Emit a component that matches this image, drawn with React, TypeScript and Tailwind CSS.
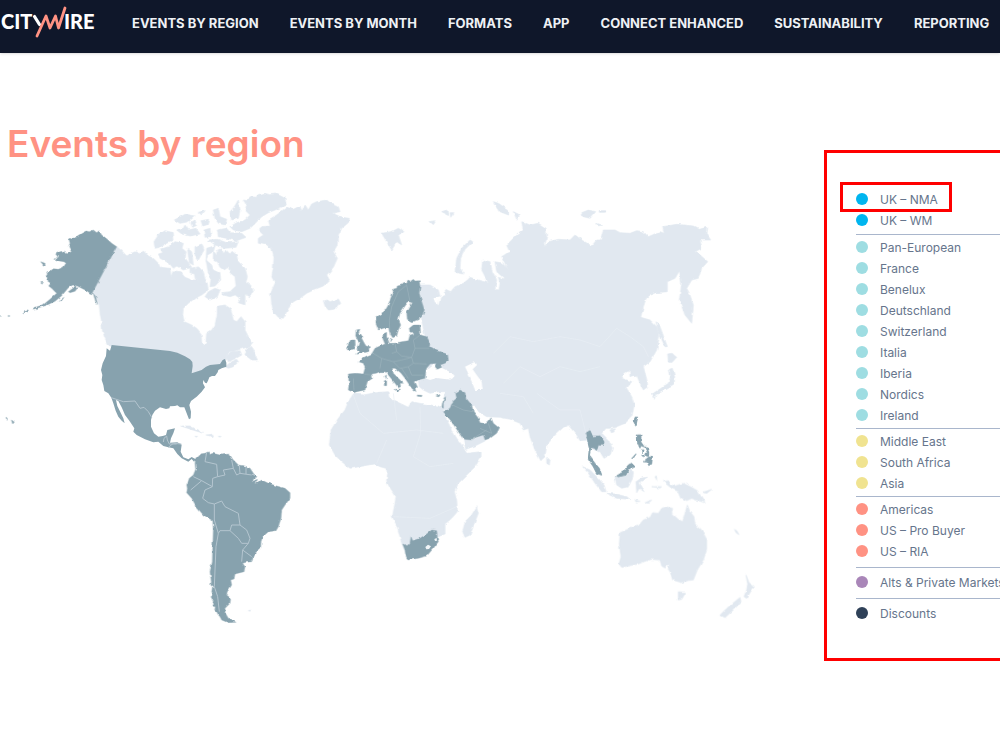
interface RegionItem {
  label: string;
  dot: string;
  marked?: boolean;
}

interface RegionGroup {
  id: string;
  spacing: string;
  items: RegionItem[];
}

const NAV_ITEMS = [
  'EVENTS BY REGION',
  'EVENTS BY MONTH',
  'FORMATS',
  'APP',
  'CONNECT ENHANCED',
  'SUSTAINABILITY',
  'REPORTING',
];

const GROUPS: RegionGroup[] = [
  {
    id: 'uk',
    spacing: 'pb-[3px]',
    items: [
      { label: 'UK – NMA', dot: 'bg-[#00b5ef]', marked: true },
      { label: 'UK – WM', dot: 'bg-[#00b5ef]' },
    ],
  },
  {
    id: 'europe',
    spacing: 'border-t py-[2px]',
    items: [
      { label: 'Pan-European', dot: 'bg-[#9edde2]' },
      { label: 'France',       dot: 'bg-[#9edde2]' },
      { label: 'Benelux',      dot: 'bg-[#9edde2]' },
      { label: 'Deutschland',  dot: 'bg-[#9edde2]' },
      { label: 'Switzerland',  dot: 'bg-[#9edde2]' },
      { label: 'Italia',       dot: 'bg-[#9edde2]' },
      { label: 'Iberia',       dot: 'bg-[#9edde2]' },
      { label: 'Nordics',      dot: 'bg-[#9edde2]' },
      { label: 'Ireland',      dot: 'bg-[#9edde2]' },
    ],
  },
  {
    id: 'emea-asia',
    spacing: 'border-t py-[2px]',
    items: [
      { label: 'Middle East',  dot: 'bg-[#f0e390]' },
      { label: 'South Africa', dot: 'bg-[#f0e390]' },
      { label: 'Asia',         dot: 'bg-[#f0e390]' },
    ],
  },
  {
    id: 'americas',
    spacing: 'border-t pt-[2px] pb-[5px]',
    items: [
      { label: 'Americas',       dot: 'bg-[#ff9283]' },
      { label: 'US – Pro Buyer', dot: 'bg-[#ff9283]' },
      { label: 'US – RIA',       dot: 'bg-[#ff9283]' },
    ],
  },
  {
    id: 'alts',
    spacing: 'border-t pt-1 pb-[5px]',
    items: [{ label: 'Alts & Private Markets', dot: 'bg-[#a986b8]' }],
  },
  {
    id: 'discounts',
    spacing: 'border-t pt-1',
    items: [{ label: 'Discounts', dot: 'bg-[#2f4158]' }],
  },
];

function Logo() {
  return (
    <svg viewBox="0 0 96 40" className="h-10 w-24 shrink-0" role="img" aria-label="Citywire">
      <g fill="#fff" fontFamily="Lato, sans-serif" fontWeight="900" fontSize="20">
        <text x="1" y="25">CIT</text>
        <text x="64" y="25">IRE</text>
      </g>
      <g fill="none" strokeLinecap="round" strokeLinejoin="round">
        <path d="M34.500 12.500 39.500 20.500" stroke="#fff" strokeWidth="3.200" />
        <path d="M37 32 46 12 50 24 55.500 12 58.500 24 65 4" stroke="#ff9283" strokeWidth="2.800" />
      </g>
    </svg>
  );
}

/** World map: event countries are dark, everything else light */
function WorldMap() {
  return (
    <svg viewBox="0 0 2472 1380" className="block w-full" role="img" aria-label="World map of event regions">
      <defs>
        {/* Roughens the coastlines */}
        <filter id="coast" filterUnits="userSpaceOnUse" x="0" y="0" width="2472" height="1380" colorInterpolationFilters="sRGB">
          <feTurbulence type="fractalNoise" baseFrequency="0.06" numOctaves="2" seed="4" result="noise" />
          <feDisplacementMap in="SourceGraphic" in2="noise" scale="9" xChannelSelector="R" yChannelSelector="G" />
        </filter>
      </defs>
      <g filter="url(#coast)">
        <g fill="#e1e8f0" stroke="#e1e8f0" strokeWidth="2" strokeLinejoin="round">
          {/* Canada */}
          <path d="M350 200 365 212 380 228 395 220 405 215 420 222 430 213 445 228 460 235 475 250 480 262 510 265 513 290 520 272 540 275 555 292 575 300 590 300 605 310 622 312 625 330 605 345 585 355 565 370 550 385 548 405 553 425 575 435 590 445 603 460 605 485 612 495 618 485 620 460 635 450 645 435 648 420 652 400 652 378 675 375 690 385 695 400 700 420 710 425 723 410 735 425 735 450 745 470 758 490 750 500 730 505 705 512 690 515 678 530 678 540 640 565 575 590 560 560 400 515 335 500 325 495 315 475 308 455 305 425 300 400 298 375 285 345 277 338Z" />
          {/* Arctic islands, Greenland, Iceland */}
          <g transform="translate(390 0)">
            <path d="M72 185 85 165 105 152 130 158 132 180 110 190 90 202 75 205ZM90 235 85 222 98 218 92 208 115 200 135 185 160 190 156 205 168 215 166 235 185 262 160 270 140 258 130 265 118 250Z" />
            <path d="M140 150 160 145 165 135 175 150 198 145 210 162 180 168 155 162ZM133 120 165 103 195 108 175 125 150 130ZM205 97 225 92 215 105ZM222 150 240 145 243 170 225 172ZM250 90 265 85 270 110 290 118 285 135 265 130 255 115ZM182 128 195 120 200 136 188 142ZM213 122 236 118 232 134 218 138Z" />
            <path d="M262 150 290 145 300 158 335 160 348 172 320 182 290 175 265 170ZM235 180 262 178 290 188 325 185 318 202 285 205 255 195ZM195 200 215 192 222 210 205 240 195 225ZM230 205 255 197 250 215 232 225 228 245ZM172 205 185 215 190 255 178 248Z" />
            <path d="M340 60 352 62 360 50 378 52 384 44 400 40 418 44 440 42 465 55 468 75 440 88 415 98 395 110 380 125 360 145 335 155 310 150 300 140 320 128 345 120 360 105 345 90 350 76ZM325 60 330 90 325 115 305 120 300 95 312 82Z" />
            <path d="M250 215 258 228 262 212 276 206 280 222 288 210 300 222 306 214 320 225 325 245 345 265 352 290 348 305 362 316 372 330 360 350 345 342 345 375 325 368 332 356 315 345 300 350 280 345 275 338 300 335 318 318 315 290 300 278 295 262 282 270 270 262 262 245 250 240Z" />
            <path d="M228 240 245 255 250 270 270 280 272 300 255 318 240 320 243 295 235 280ZM255 325 270 330 262 350 240 360 225 350 235 335ZM205 260 220 275 225 295 232 312 210 312 195 295 192 272ZM180 265 196 262 192 282 180 278Z" />
            <path d="M470 82 490 88 510 78 515 94 525 75 535 90 545 72 560 65 590 60 605 72 625 80 630 95 606 99 635 112 658 115 655 128 635 145 625 165 625 190 610 215 622 235 610 262 590 285 598 300 580 318 555 328 530 340 510 355 490 365 475 385 460 415 445 412 430 395 425 370 422 340 435 310 425 290 430 265 432 230 425 205 410 195 385 190 385 175 400 165 385 150 395 140 420 138 415 120 440 105Z" />
            <path d="M580 362 592 360 600 365 625 357 632 370 615 388 595 390 585 378ZM345 525 350 508 362 500 370 510 382 540 365 540ZM285 560 300 548 320 538 325 545 310 560 295 565ZM288 530 305 515 330 512 335 525 318 535 295 545Z" />
          </g>
          {/* Caribbean */}
          <path d="M542 738 570 738 610 760 585 752ZM618 765 642 762 638 770ZM655 769 663 769 660 772ZM585 769 592 769 590 772ZM745 1292 752 1290 750 1294Z" />
          {/* Eurasia */}
          <path d="M1260 315 1290 315 1315 330 1320 348 1298 356 1306 368 1316 377 1322 352 1338 345 1335 327 1352 335 1365 320 1390 310 1405 298 1410 292 1440 302 1465 308 1445 270 1448 240 1470 245 1475 270 1490 300 1485 328 1497 330 1500 310 1495 292 1515 298 1490 275 1485 245 1510 250 1525 270 1505 230 1528 215 1520 195 1545 170 1570 150 1565 125 1590 135 1615 130 1638 145 1640 170 1632 202 1645 185 1675 178 1710 180 1725 165 1745 180 1775 198 1790 180 1802 180 1810 150 1845 150 1860 158 1890 160 1910 152 1930 155 1945 170 1980 155 1992 160 1988 140 2030 133 2080 138 2098 148 2120 142 2118 160 2132 180 2100 180 2105 205 2085 215 2100 225 2123 245 2105 265 2095 295 2075 300 2060 325 2068 340 2080 375 2075 430 2055 405 2038 360 2045 310 2038 273 2025 295 2002 305 2002 335 1970 338 1940 350 1930 380 1922 412 1950 420 1970 440 1978 470 1970 510 1950 545 1930 560 1940 595 1943 620 1930 630 1918 605 1910 585 1890 590 1888 572 1875 578 1865 595 1895 605 1880 625 1895 650 1903 675 1895 710 1875 730 1845 742 1830 745 1818 745 1805 760 1825 780 1837 805 1830 825 1812 835 1800 815 1770 805 1760 780 1740 782 1730 765 1705 735 1690 742 1665 765 1640 795 1635 830 1622 842 1605 810 1590 770 1585 745 1570 750 1560 730 1530 718 1500 712 1460 710 1435 695 1415 675 1325 690 1330 660 1338 635 1315 635 1290 640 1270 630 1258 620 1255 602 1275 596 1290 545 1265 420Z" />
          <path d="M1365 275 1370 235 1385 205 1410 180 1418 185 1395 208 1382 235 1380 265 1392 282 1375 280ZM1480 65 1495 70 1525 90 1525 105 1500 95ZM1540 95 1560 105 1550 118ZM1745 98 1765 90 1787 95 1770 115 1750 110ZM1798 92 1816 92 1816 97 1798 97ZM1790 130 1805 135 1795 138ZM1145 160 1175 155 1195 145 1212 155 1195 165 1205 195 1190 185 1175 210 1160 185ZM1325 95 1340 90 1345 105ZM1350 98 1362 98 1352 112ZM1290 125 1308 122 1300 134Z" />
          {/* Japan, Sakhalin, Sri Lanka, Hainan */}
          <path d="M1968 425 1980 440 2002 500 1995 500 1975 455ZM2003 522 2015 520 2030 532 2015 548 2005 545ZM1960 640 1975 630 1990 620 2005 610 2012 590 2008 568 2017 565 2024 590 2022 612 2005 622 1990 630 1970 640ZM1957 640 1967 642 1963 658ZM1640 832 1650 840 1648 855 1640 850ZM1830 750 1842 746 1842 756 1834 758Z" />
          {/* Africa and Yemen */}
          <g transform="translate(960 570)">
            <path d="M100 72 130 75 165 68 205 65 207 85 240 100 265 112 275 95 310 102 355 108 368 115 378 145 395 180 410 205 425 225 440 250 483 245 483 260 465 290 440 315 415 340 403 365 410 390 412 425 395 445 375 462 375 492 355 500 340 520 258 550 245 520 232 470 217 440 225 400 228 380 205 345 200 330 203 310 198 295 180 290 165 282 130 288 90 295 65 275 45 255 28 225 33 180 55 145 75 120 85 95Z" />
            <path d="M470 410 475 430 465 455 450 495 435 502 428 485 435 455 455 435ZM430 208 455 210 490 195 495 213 465 228 437 238Z" />
          </g>
          {/* Indonesia */}
          <path d="M1748 860 1770 870 1790 890 1812 915 1818 935 1805 935 1785 910 1765 880ZM1818 940 1845 942 1880 950 1890 958 1850 955ZM1845 892 1880 885 1890 870 1900 875 1898 895 1885 920 1865 925 1850 915ZM1908 905 1925 894 1945 892 1915 908 1932 935 1918 925 1910 938Z" />
          {/* Oceania */}
          <g transform="translate(1680 840)">
            <path d="M180 218 210 205 235 198 250 180 270 172 278 158 295 160 305 145 320 140 338 145 335 160 355 178 368 185 375 160 382 135 390 155 402 170 405 192 425 210 440 238 440 270 430 300 412 330 400 360 380 362 365 368 338 360 330 335 325 328 328 312 315 324 305 318 300 300 270 298 235 312 205 318 185 322 177 312 183 290 178 255Z" />
            <path d="M310 65 325 62 330 75 345 78 370 70 395 82 412 92 435 128 415 122 395 115 380 122 362 112 355 95 335 85ZM428 97 455 88 440 100ZM355 395 377 397 365 418 355 420ZM558 345 567 368 583 380 570 398 560 415 552 410 560 390 563 372ZM540 412 543 425 520 450 495 473 480 465 500 445ZM523 208 530 212 537 224 528 218ZM225 120 240 124 228 126ZM255 128 275 120 265 130ZM285 50 290 48 290 60ZM275 80 305 80 300 84Z" />
          </g>
        </g>

        {/* Seas cut into Eurasia */}
        <g fill="#fff">
          <path d="M1275 595 1282 567 1300 552 1318 560 1355 578 1366 590 1350 599 1310 594 1290 600Z" />
          <path d="M1395 560 1425 545 1431 555 1418 568 1430 585 1445 605 1448 630 1425 630 1415 605 1405 582Z" />
        </g>

        <g fill="#87a2ae" stroke="#87a2ae" strokeWidth="1" strokeLinejoin="round">
          {/* Alaska, Hawaii */}
          <path d="M350 200 335 190 322 178 305 165 297 152 290 158 280 150 268 155 258 153 245 160 232 168 218 172 207 178 210 190 206 200 214 215 200 222 194 213 180 215 167 222 173 230 165 238 178 243 192 245 198 250 190 262 175 268 160 266 145 278 137 290 142 300 153 308 146 318 155 325 165 335 170 340 150 358 130 374 100 384 100 388 140 376 165 364 185 347 195 335 205 323 218 315 232 318 245 325 260 332 270 340 280 342 288 368 292 370 286 348 277 338ZM205 335 225 320 234 322 225 334 210 338ZM175 364 192 352 185 362ZM122 245 135 250 136 257 130 255ZM122 305 130 304 126 310ZM80 392 86 394 68 402ZM25 406 30 408 25 410ZM0 407 5 408 0 410ZM34 720 43 726 38 732ZM18 712 26 715 20 718Z" />
          {/* South America */}
          <path transform="translate(510 750)" d="M77 85 90 72 105 70 115 65 118 74 128 70 150 75 178 72 188 88 205 105 225 108 240 115 250 130 257 140 245 155 262 148 258 162 275 150 295 160 320 168 345 175 360 188 360 205 345 225 335 240 333 265 325 290 318 302 295 305 278 320 273 335 272 355 255 370 245 395 228 397 218 400 225 410 222 425 195 432 192 447 182 450 185 465 172 485 170 495 182 505 180 520 165 535 165 548 175 565 198 577 175 578 155 570 150 560 145 555 140 545 134 540 136 530 126 528 130 515 123 500 130 495 125 485 128 470 122 465 124 455 120 425 127 395 128 350 130 300 128 272 100 255 80 232 65 205 50 188 52 175 50 165 58 145 70 135 77 118 75 100Z" />
          {/* Europe */}
          <g transform="translate(990 120)">
            <path d="M138 290 150 283 165 272 175 255 182 235 190 215 187 208 200 205 202 198 215 195 220 188 230 187 234 180 242 184 250 178 255 183 268 182 270 200 268 220 275 245 283 270 275 290 262 300 245 305 232 298 230 280 240 262 247 248 235 245 225 258 210 280 205 298 212 315 205 330 200 348 188 353 180 340 175 322 160 325 145 330 138 312Z" />
            <path d="M250 315 270 315 272 345 290 350 300 368 298 380 320 392 353 403 355 422 345 430 330 435 335 442 322 448 315 440 318 430 300 432 290 445 287 460 285 475 265 480 255 485 262 500 255 505 258 515 245 505 235 490 225 475 212 458 195 445 187 445 190 460 205 475 220 490 210 490 212 500 205 503 195 490 175 465 165 455 150 455 138 460 125 462 128 475 112 485 105 510 80 515 72 518 55 510 57 490 55 462 75 460 100 462 105 445 100 430 85 425 97 415 110 408 125 402 135 385 150 378 165 372 158 355 159 342 170 337 170 350 178 370 195 370 215 365 235 362 240 345 252 342 246 335 240 340 238 325Z" />
            <path d="M78 330 90 328 85 338 95 345 95 355 103 370 108 378 118 380 115 395 95 400 80 403 90 392 80 388 88 375 90 366 83 360 77 348ZM55 372 62 360 75 360 76 375 70 388 52 390ZM192 508 208 507 205 515ZM163 482 170 481 170 497 163 497ZM165 468 169 465 169 478ZM262 525 276 526 275 530 262 529ZM318 528 332 523 326 531ZM180 355 187 358 182 365Z" />
          </g>
          {/* South Africa, Middle East */}
          <g transform="translate(960 570)">
            <path d="M248 522 262 527 270 518 273 500 278 512 300 505 320 492 335 480 350 482 352 505 355 515 340 535 320 558 295 565 263 570 257 555 255 540Z" />
            <path d="M370 125 390 115 398 95 410 85 407 68 420 60 435 68 438 85 455 105 460 125 475 145 480 158 490 160 505 155 513 143 520 160 538 175 530 190 510 205 495 210 490 195 465 203 455 210 430 208 415 185 395 155ZM368 95 373 83 377 80 370 100 370 115 365 112Z" />
          </g>
          {/* Thailand, Malaysia, Taiwan, Philippines */}
          <g transform="translate(1500 480)" strokeWidth="3">
            <path d="M257 280 270 272 278 290 300 288 312 305 310 315 295 315 290 330 275 322 270 335 268 348 285 370 298 385 305 405 290 400 280 380 265 358 268 325 263 300ZM405 232 413 232 408 255 402 248ZM350 408 370 395 385 375 395 370 405 380 385 390 378 405 355 410Z" />
            <path d="M412 285 423 285 422 305 432 320 425 318 413 312ZM434 320 442 325 446 337 440 334ZM424 330 429 330 427 338ZM437 340 446 336 446 348 440 348ZM425 346 436 345 432 350ZM430 365 445 352 457 350 455 372 446 376 442 366ZM416 316 422 318 420 324ZM395 356 408 342 400 354Z" />
          </g>
        </g>
      </g>

      {/* USA, Mexico, Central America */}
      <path
        transform="translate(270 420)"
        fill="#87a2ae"
        d="M65 75 240 93 262 98 285 109 300 118 307 126 308 138 305 160 335 150 348 140 360 135 390 132 398 120 405 117 409 128 409 140 395 145 385 150 383 157 375 168 366 168 358 172 354 182 350 190 345 188 340 180 339 190 345 202 335 215 320 230 303 243 298 255 303 275 302 295 297 298 290 280 283 262 270 262 262 256 255 258 240 259 238 265 228 267 210 262 195 272 187 285 183 300 183 320 192 340 205 350 218 348 228 345 232 330 255 325 250 340 243 355 240 368 262 367 275 374 272 395 280 412 295 418 305 411 317 418 312 425 305 417 295 425 275 415 262 402 250 385 235 382 220 378 205 365 190 367 165 358 140 345 130 335 133 325 118 302 105 285 95 262 85 243 78 240 82 258 92 278 100 295 104 310 95 302 85 290 77 272 70 250 64 233 55 220 43 213 40 195 35 180 37 165 33 150 38 130 48 108 50 85 60 92Z"
      />

      {/* Persian Gulf, Lesotho, Eswatini */}
      <path d="M1420 678 1440 708 1450 718" fill="none" stroke="#fff" strokeWidth="6" />
      <path d="M1276 1101 1284 1094 1293 1099 1287 1107 1279 1108ZM1303 1077 1310 1074 1311 1082 1305 1083Z" fill="#f1f5f8" />

      {/* Country borders on the light land */}
      <g fill="none" stroke="#e8eef4" strokeWidth="2">
        <path d="M1480 520 1530 470 1600 485 1680 470 1740 480 1800 500 1850 445 1890 470 1930 500 1945 530M1510 610 1560 560 1620 590 1680 560 1740 575 1800 560M1500 640 1570 650 1600 700M1610 640 1680 690 1740 690 1760 770" />
        <path d="M1060 645 1080 700 1150 760 1250 750 1330 760M1180 640 1190 720M1260 680 1262 760 1240 830 1290 860 1360 850M1180 1010 1290 1015 1370 980M1130 850 1160 780" />
      </g>

      {/* Country borders on the dark land */}
      <g fill="none" stroke="#b4c5cf" strokeWidth="3" strokeLinejoin="round">
        <path d="M334 653 370 665 405 663 420 685 432 682 445 695 455 712M490 786 492 775 500 768 502 780 508 792 530 792M505 802 520 790 544 792" />
        <path transform="translate(510 750)" d="M110 68 105 95 140 103 143 140 128 145 127 170 95 152 62 180M70 140 95 152M143 140 165 135 160 120 190 115 185 90M190 115 200 135 210 130 208 108M210 130 245 135M228 110 228 132M127 170 105 180 98 205 115 218 133 222 155 213 165 230 205 250 210 285 185 285 180 302 150 302 145 310 133 270 133 222M145 310 138 350 135 420 133 470 143 500 148 545M210 285 230 300 240 325 235 340 215 340 205 325 180 302M235 340 218 360 245 380M218 360 215 395" />
      </g>
      <g fill="none" stroke="#9db3bd" strokeWidth="2" strokeLinejoin="round">
        <path transform="translate(990 120)" d="M180 345 178 300 185 260 205 215 230 195 240 245M195 370 200 395 215 408 245 412 255 385 250 360 270 345M255 385 298 385M130 400 155 415 150 445M155 415 190 425 215 420 245 412 250 430 290 432M185 400 200 395M190 425 210 445 235 440 250 430M235 440 245 465 280 465M215 445 235 475M70 475 72 512M103 462 125 465" />
        <path transform="translate(960 570)" d="M398 105 430 120 458 125M480 175 515 190 505 160M455 208 500 180" />
      </g>
    </svg>
  );
}

function LegendItem({ label, dot, marked }: RegionItem) {
  return (
    <li className="relative h-[21px]">
      {marked && (
        <span className="pointer-events-none absolute -left-4 -top-[7px] h-[30px] w-28 border-[3px] border-[#ff0000]" />
      )}
      <a href="#" className="flex h-full items-center gap-3 whitespace-nowrap text-xs leading-5 text-[#66758c]">
        <span className={`-mt-[2px] h-3 w-3 shrink-0 rounded-full ${dot}`} />
        {label}
      </a>
    </li>
  );
}

export default function App() {
  return (
    <div className="min-h-screen overflow-hidden bg-white font-['Inter',sans-serif]">
      <header className="flex h-[53px] items-start gap-9 bg-[#0f172a] pt-1 shadow">
        <Logo />
        <nav className="flex h-10 items-center gap-[31px] whitespace-nowrap">
          {NAV_ITEMS.map(item => (
            <a key={item} href="#" className="text-[13px] font-bold text-[#eef1f5]">{item}</a>
          ))}
        </nav>
      </header>

      <main className="flex items-start">
        <section className="min-w-0 flex-1 pt-[67px]">
          <h1 className="mb-3 pl-[7px] text-[37px] font-semibold leading-[48px] text-[#ff9283]">Events by region</h1>
          <WorldMap />
        </section>

        <aside className="mt-[97px] w-44 shrink-0 overflow-hidden border-y-[3px] border-l-[3px] border-[#ff0000] pt-9 pb-[34px] pl-[29px]">
          {GROUPS.map(group => (
            <ul key={group.id} className={`border-[#a9b6cc] ${group.spacing}`}>
              {group.items.map(item => <LegendItem key={item.label} {...item} />)}
            </ul>
          ))}
        </aside>
      </main>
    </div>
  );
}
